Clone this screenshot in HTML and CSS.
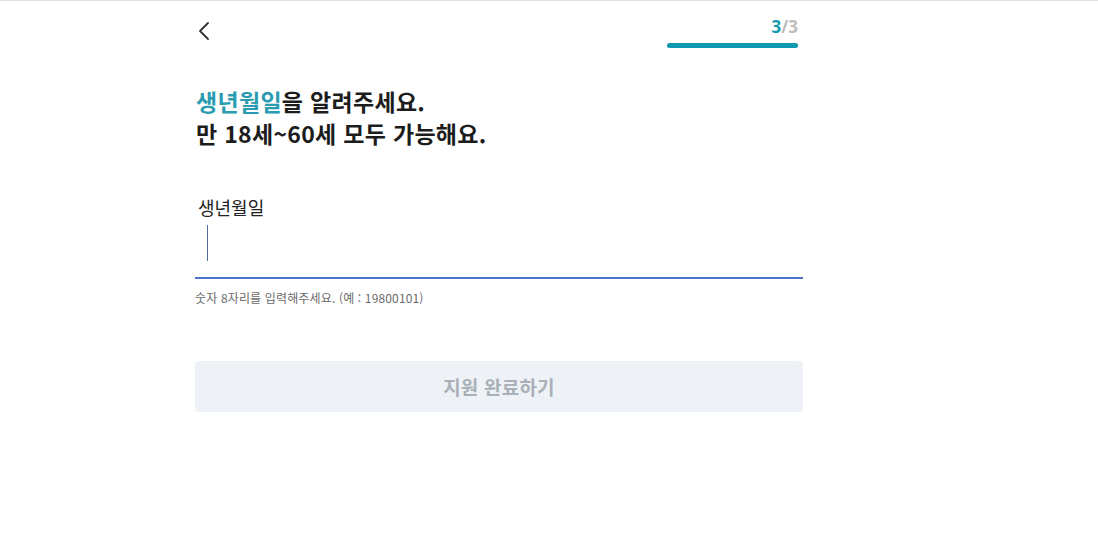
FILE: index.html
```html
<!DOCTYPE html>
<html lang="ko">
<head>
<meta charset="utf-8">
<link rel="stylesheet" href="styles.css">
</head>
<body>
<div class="page">
  <header class="topbar">
    <button class="back" aria-label="뒤로">
      <svg width="14" height="20" viewBox="0 0 14 20"><path d="M11 2 L3 10 L11 18" fill="none" stroke="#333" stroke-width="1.8" stroke-linecap="round" stroke-linejoin="round"/></svg>
    </button>
    <div class="progress">
      <div class="step"><span class="cur">3</span><span class="tot">/3</span></div>
      <div class="bar"><div class="fill" style="width:100%"></div></div>
    </div>
  </header>
  <h1 class="title"><span class="accent">생년월일</span>을 알려주세요.<br>만 18세~60세 모두 가능해요.</h1>
  <div class="field">
    <label class="label">생년월일</label>
    <div class="input"><span class="caret"></span></div>
    <p class="help">숫자 8자리를 입력해주세요. (예 : 19800101)</p>
  </div>
  <button class="submit">지원 완료하기</button>
</div>
</body>
</html>
```
FILE: styles.css
```css
html, body { margin: 0; padding: 0; background: #fff; }
body {
  border-top: 1px solid #e3e3e3;
  font-family: "Noto Sans CJK KR", "Noto Sans", sans-serif;
  color: #222;
}
.page {
  width: 608px;
  margin-left: 195px;
}
.topbar {
  display: flex;
  justify-content: space-between;
  align-items: flex-start;
  height: 50px;
}
.back {
  border: 0;
  background: none;
  padding: 0;
  margin: 20px 0 0 2px;
  width: 14px;
  height: 20px;
  display: flex;
}
.progress {
  width: 131px;
  margin-right: 5px;
  padding-top: 14px;
}
.step {
  text-align: right;
  font-family: "Open Sans", "Noto Sans CJK KR", sans-serif;
  font-weight: 700;
  font-size: 17px;
  line-height: 24px;
}
.cur { color: #1799ad; }
.tot { color: #bdbdbd; }
.bar {
  margin-top: 4px;
  height: 5px;
  border-radius: 3px;
  background: #e6e6e6;
}
.fill {
  height: 5px;
  border-radius: 3px;
  background: #0e99af;
}
.title {
  margin: 34px 0 0 1px;
  font-size: 23px;
  line-height: 32px;
  font-weight: 700;
  color: #1c1c1c;
  letter-spacing: 0.3px;
}
.accent { color: #2a9cb1; }
.field { margin-top: 46px; }
.label {
  display: block;
  margin-left: 3px;
  font-size: 18px;
  line-height: 24px;
  color: #222;
}
.input {
  height: 58px;
  border-bottom: 2px solid #4a74c7;
  display: flex;
  align-items: flex-start;
}
.caret {
  display: block;
  width: 1px;
  height: 36px;
  margin: 6px 0 0 12px;
  background: #4d6a9a;
}
.help {
  margin: 10px 0 0 0;
  font-size: 12px;
  line-height: 18px;
  color: #6a6a6a;
  letter-spacing: 0.15px;
}
.submit {
  display: block;
  width: 608px;
  height: 51px;
  margin-top: 54px;
  border: 0;
  border-radius: 4px;
  background: #eef2f6;
  color: #a9b0b8;
  font-family: "Noto Sans CJK KR", sans-serif;
  font-size: 19px;
  font-weight: 700;
  letter-spacing: 0.2px;
}
```
